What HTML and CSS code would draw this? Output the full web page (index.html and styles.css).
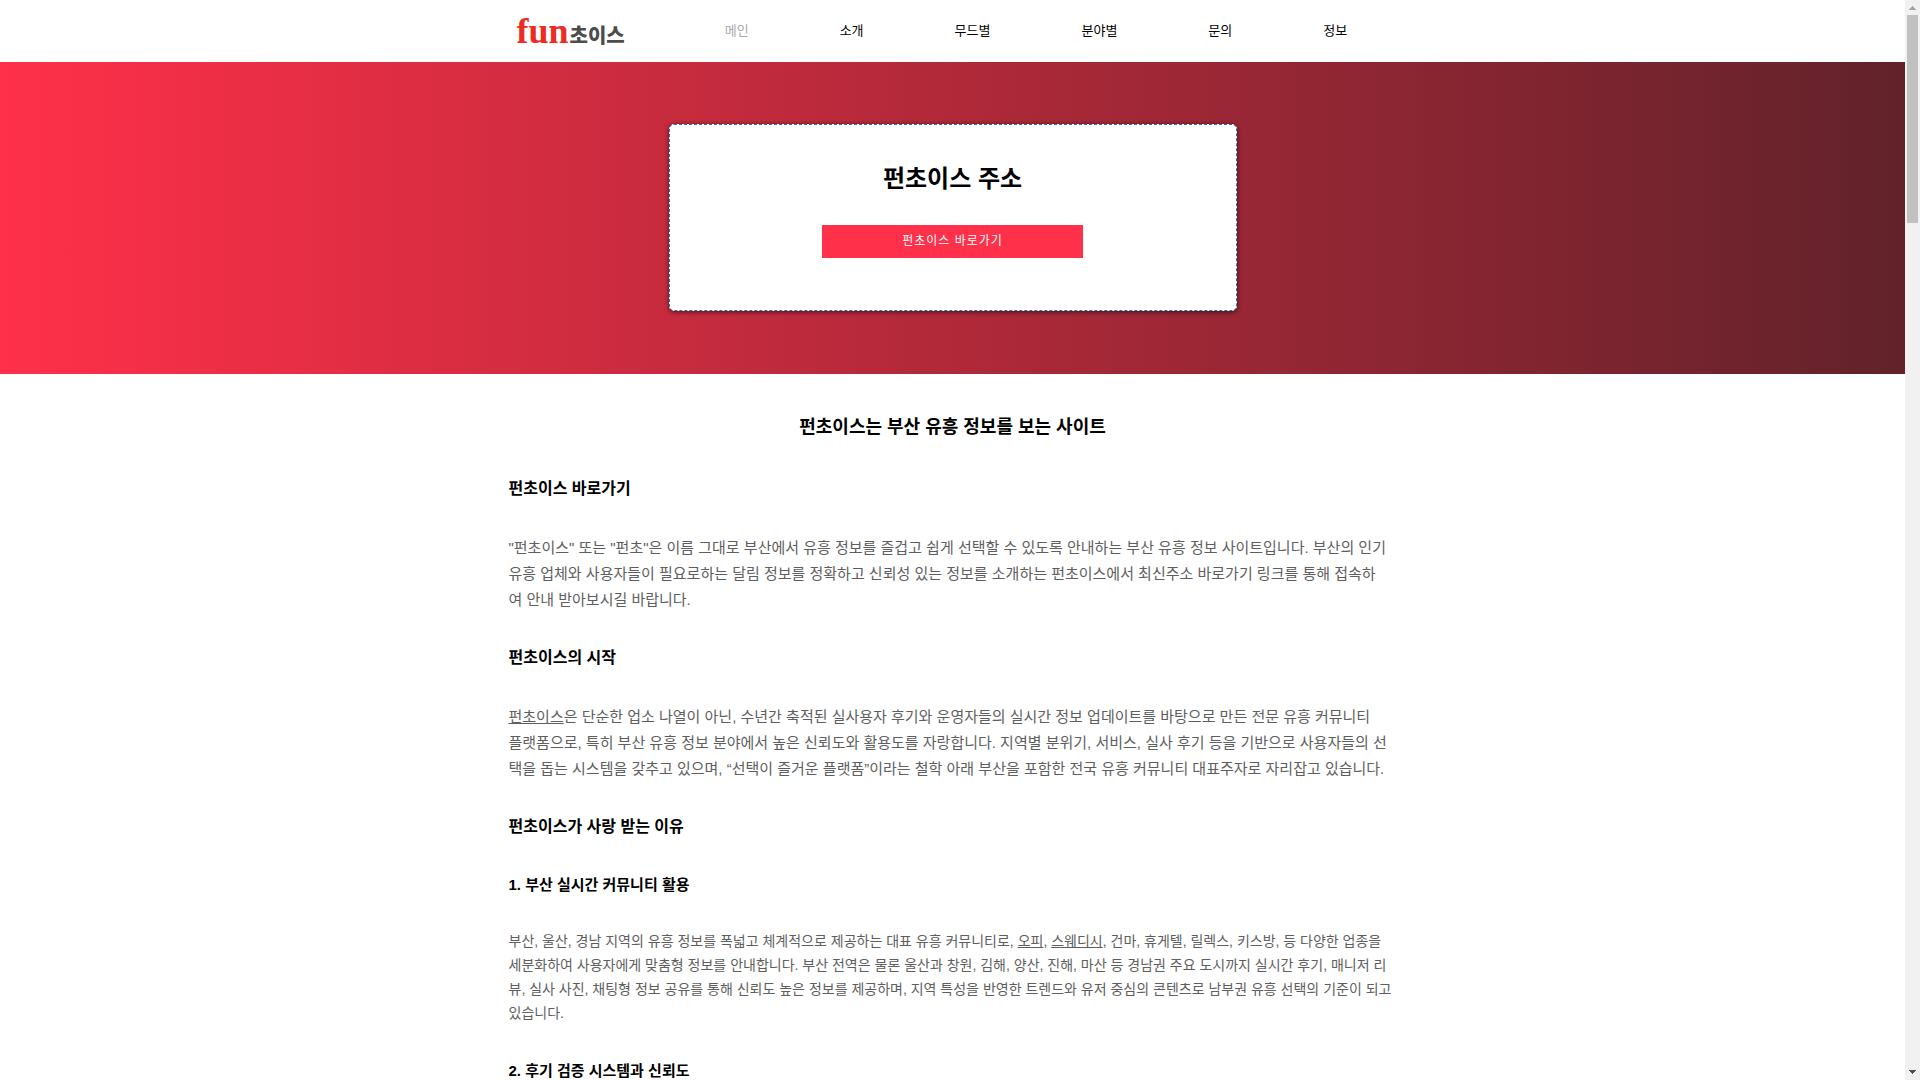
FILE: index.html
```html
<!DOCTYPE html>
<html lang="ko">
<head>
    <meta charset="UTF-8">
    <meta name="viewport" content="width=device-width, initial-scale=1.0">
    <title>펀초이스 주소</title>
    <link rel="stylesheet" href="styles.css">
</head>
<body>
    <header class="header">
        <div class="container header-inner">
            <a class="logo" href="#"><span class="logo-fun">fun</span><span class="logo-choice">초이스</span></a>
            <nav class="nav">
                <a class="active" href="#">메인</a>
                <a href="#">소개</a>
                <a href="#">무드별</a>
                <a href="#">분야별</a>
                <a href="#">문의</a>
                <a href="#">정보</a>
            </nav>
        </div>
    </header>

    <section class="hero">
        <div class="hero-card">
            <h1>펀초이스 주소</h1>
            <a class="hero-button" href="#">펀초이스 바로가기</a>
        </div>
    </section>

    <main class="container content">
        <h2 class="title">펀초이스는 부산 유흥 정보를 보는 사이트</h2>

        <h3>펀초이스 바로가기</h3>
        <p>"펀초이스" 또는 "펀초"은 이름 그대로 부산에서 유흥 정보를 즐겁고 쉽게 선택할 수 있도록 안내하는 부산 유흥 정보 사이트입니다. 부산의 인기<br>유흥 업체와 사용자들이 필요로하는 달림 정보를 정확하고 신뢰성 있는 정보를 소개하는 펀초이스에서 최신주소 바로가기 링크를 통해 접속하<br>여 안내 받아보시길 바랍니다.</p>

        <h3>펀초이스의 시작</h3>
        <p><a href="#">펀초이스</a>은 단순한 업소 나열이 아닌, 수년간 축적된 실사용자 후기와 운영자들의 실시간 정보 업데이트를 바탕으로 만든 전문 유흥 커뮤니티<br>플랫폼으로, 특히 부산 유흥 정보 분야에서 높은 신뢰도와 활용도를 자랑합니다. 지역별 분위기, 서비스, 실사 후기 등을 기반으로 사용자들의 선<br>택을 돕는 시스템을 갖추고 있으며, “선택이 즐거운 플랫폼”이라는 철학 아래 부산을 포함한 전국 유흥 커뮤니티 대표주자로 자리잡고 있습니다.</p>

        <h3>펀초이스가 사랑 받는 이유</h3>

        <h4>1. 부산 실시간 커뮤니티 활용</h4>
        <p class="small">부산, 울산, 경남 지역의 유흥 정보를 폭넓고 체계적으로 제공하는 대표 유흥 커뮤니티로, <a href="#">오피</a>, <a href="#">스웨디시</a>, 건마, 휴게텔, 릴렉스, 키스방, 등 다양한 업종을 세분화하여 사용자에게 맞춤형 정보를 안내합니다. 부산 전역은 물론 울산과 창원, 김해, 양산, 진해, 마산 등 경남권 주요 도시까지 실시간 후기, 매니저 리뷰, 실사 사진, 채팅형 정보 공유를 통해 신뢰도 높은 정보를 제공하며, 지역 특성을 반영한 트렌드와 유저 중심의 콘텐츠로 남부권 유흥 선택의 기준이 되고 있습니다.</p>

        <h4>2. 후기 검증 시스템과 신뢰도</h4>
    </main>

    <div class="scrollbar" aria-hidden="true">
        <svg class="arrow" viewBox="0 0 15 15"><path fill="#a3a3a3" d="M7 6h1v1h1v1h1v1h1v1H4V9h1V8h1V7h1z"/></svg>
        <div class="thumb"></div>
        <svg class="arrow" viewBox="0 0 15 15"><path fill="#505050" d="M4 5h7v1h-1v1H9v1H8v1H7V8H6V7H5V6H4z"/></svg>
    </div>
</body>
</html>
```
FILE: styles.css
```css
* {
    margin: 0;
    padding: 0;
    box-sizing: border-box;
}

body {
    height: 100vh;
    overflow: hidden;
    padding-right: 15px;
    font-family: "Liberation Sans", "Noto Sans CJK KR", sans-serif;
    color: #000;
    background-color: #fff;
}

.container {
    width: 100%;
    max-width: 888px;
    margin: 0 auto;
}

.header-inner {
    display: flex;
    align-items: center;
    height: 62px;
    padding: 0 8px;
}

.logo {
    display: flex;
    align-items: baseline;
    gap: 1px;
    margin-right: 100px;
    text-decoration: none;
}

.logo-fun {
    font-family: "Liberation Serif", serif;
    font-size: 36px;
    font-weight: bold;
    color: #ee2a24;
}

.logo-choice {
    font-family: "Noto Sans CJK KR", sans-serif;
    font-size: 20px;
    font-weight: 900;
    color: #4d4d4d;
}

.nav {
    display: flex;
    gap: 91px;
    padding-bottom: 4px;
}

.nav a {
    font-size: 13px;
    color: #000;
    text-decoration: none;
}

.nav .active {
    color: #aaa;
}

.hero {
    display: flex;
    justify-content: center;
    padding: 62px 16px 63px;
    background: linear-gradient(90deg, #ff3049, #62222a);
}

.hero-card {
    display: flex;
    flex-direction: column;
    align-items: center;
    gap: 28px;
    width: 568px;
    padding: 36px 16px 52px;
    background-color: #fff;
    border: 1px dashed #2f6da8;
    border-radius: 5px;
    box-shadow: 0 1px 5px rgba(0, 0, 0, 0.6);
}

.hero-card h1 {
    font-size: 24px;
    line-height: 36px;
}

.hero-button {
    width: 261px;
    font-size: 12px;
    line-height: 33px;
    letter-spacing: 1px;
    text-align: center;
    color: #fff;
    background-color: #ff3049;
    text-decoration: none;
}

.content {
    padding-top: 40px;
}

.content h2 {
    font-size: 18px;
    line-height: 26px;
    text-align: center;
    margin-bottom: 36px;
}

.content h3 {
    font-size: 16px;
    line-height: 26px;
    margin-bottom: 33px;
}

.content h4 {
    font-size: 15px;
    line-height: 24px;
    margin-bottom: 32px;
}

.content p {
    font-size: 15px;
    line-height: 26px;
    color: #5e5e5e;
    margin-bottom: 32px;
}

.content .small {
    font-size: 14px;
    line-height: 24px;
    margin-bottom: 34px;
}

.content p a {
    color: inherit;
}

.scrollbar {
    position: fixed;
    top: 0;
    right: 0;
    bottom: 0;
    display: flex;
    flex-direction: column;
    width: 15px;
    background-color: #f1f1f1;
}

.arrow {
    width: 15px;
    height: 15px;
}

.thumb {
    height: 208px;
    margin: 0 2px auto;
    background-color: #c1c1c1;
}
```
